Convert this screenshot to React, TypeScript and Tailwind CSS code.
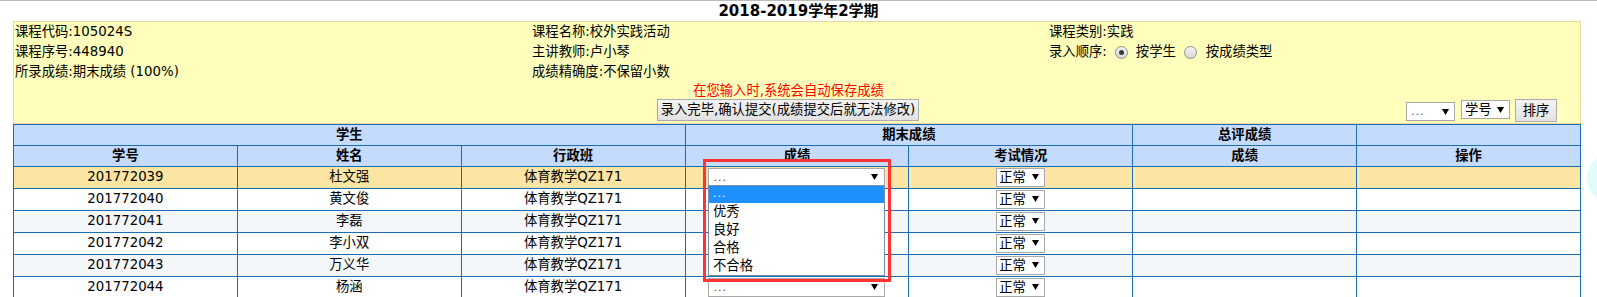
import React from "react";

function Arrow() {
  return (
    <svg width="7" height="6" viewBox="0 0 7 6" className="block">
      <polygon points="0,0 7,0 3.5,6" fill="#000" />
    </svg>
  );
}

function Radio({ checked }: { checked?: boolean }) {
  return (
    <span className="inline-flex w-[13px] h-[13px] rounded-full border border-[#8f8f8f] bg-gradient-to-b from-[#f4f4f4] to-[#d8d8d8] items-center justify-center shrink-0">
      {checked ? <span className="w-[5px] h-[5px] rounded-full bg-[#3a3a3a]" /> : null}
    </span>
  );
}

function GradeSelect() {
  return (
    <div className="mx-auto w-[177px] h-[19px] border border-[#a8a8a8] bg-white flex items-center justify-between pl-[4px] pr-[6px] text-left">
      <span className="text-[11px] leading-none text-[#6b3b3b] tracking-[1px]">...</span>
      <Arrow />
    </div>
  );
}

function StatusSelect() {
  return (
    <div className="mx-auto w-[49px] h-[19px] border border-[#a8a8a8] bg-white flex items-center justify-between pl-[2px] pr-[5px]">
      <span className="leading-none">正常</span>
      <Arrow />
    </div>
  );
}

const rows = [
  { id: "201772039", name: "杜文强", bg: "bg-[#fce5a2]", sel: true },
  { id: "201772040", name: "黄文俊", bg: "bg-white", sel: false },
  { id: "201772041", name: "李磊", bg: "bg-[#f4f7fa]", sel: false },
  { id: "201772042", name: "李小双", bg: "bg-white", sel: false },
  { id: "201772043", name: "万义华", bg: "bg-[#f4f7fa]", sel: false },
  { id: "201772044", name: "杨涵", bg: "bg-white", sel: true },
];

export default function App() {
  return (
    <div className="relative w-[1597px] h-[297px] overflow-hidden bg-white text-black text-[13.33px] font-['DejaVu_Sans','Noto_Sans_CJK_SC',sans-serif]">
      <div className="h-px bg-[#bcbcbc]" />
      <div className="h-[20px] leading-[20px] text-center font-bold text-[15px]">2018-2019学年2学期</div>

      <div className="ml-[13px] w-[1568px] border border-[#ecd9a0] bg-[#ffffbb]">
        <div className="grid grid-cols-[517px_517px_1fr] pl-[1px]">
          <div className="flex flex-col">
            <div className="h-[20px] leading-[20px]">课程代码:105024S</div>
            <div className="h-[20px] leading-[20px]">课程序号:448940</div>
            <div className="h-[20px] leading-[20px]">所录成绩:期末成绩 (100%)</div>
          </div>
          <div className="flex flex-col">
            <div className="h-[20px] leading-[20px]">课程名称:校外实践活动</div>
            <div className="h-[20px] leading-[20px]">主讲教师:卢小琴</div>
            <div className="h-[20px] leading-[20px]">成绩精确度:不保留小数</div>
          </div>
          <div className="flex flex-col">
            <div className="h-[20px] leading-[20px]">课程类别:实践</div>
            <div className="h-[20px] flex items-center">
              <span>录入顺序:</span>
              <span className="ml-[8px] mr-[8px] flex"><Radio checked /></span>
              <span>按学生</span>
              <span className="ml-[8px] mr-[9px] flex"><Radio /></span>
              <span>按成绩类型</span>
            </div>
            <div className="h-[20px]" />
          </div>
        </div>
        <div className="h-[17px] leading-[17px] text-center pr-[17px] text-[#ff0000]">在您输入时,系统会自动保存成绩</div>
        <div className="h-[24px] flex items-start">
          <div className="w-[643px] shrink-0" />
          <div className="w-[262px] h-[22px] shrink-0 border border-[#acacac] bg-gradient-to-b from-[#f3f3f3] to-[#e2e2e2] flex items-center justify-center leading-none">
            录入完毕,确认提交(成绩提交后就无法修改)
          </div>
          <div className="flex-1" />
          <div className="mt-[3px] w-[49px] h-[19px] border border-[#a8a8a8] bg-white flex items-center justify-between pl-[4px] pr-[5px]">
            <span className="text-[11px] leading-none text-[#555] tracking-[1px]">...</span>
            <Arrow />
          </div>
          <div className="ml-[6px] mt-[1px] w-[49px] h-[19px] border border-[#a8a8a8] bg-white flex items-center justify-between pl-[3px] pr-[5px]">
            <span className="leading-none">学号</span>
            <Arrow />
          </div>
          <div className="ml-[5px] w-[42px] h-[23px] border border-[#acacac] bg-gradient-to-b from-[#f3f3f3] to-[#e2e2e2] flex items-center justify-center leading-none">
            排序
          </div>
          <div className="w-[23px] shrink-0" />
        </div>
      </div>

      <table className="ml-[13px] w-[1568px] table-fixed border-collapse text-center">
        <tbody>
          <tr className="h-[20px] bg-[#c5dbfd] font-bold">
            <td colSpan={3} className="border border-[#1b6db8] p-0">学生</td>
            <td colSpan={2} className="border border-[#1b6db8] p-0">期末成绩</td>
            <td className="border border-[#1b6db8] p-0">总评成绩</td>
            <td className="border border-[#1b6db8] p-0"></td>
          </tr>
          <tr className="h-[20px] bg-[#c5dbfd] font-bold">
            <td className="border border-[#1b6db8] p-0">学号</td>
            <td className="border border-[#1b6db8] p-0">姓名</td>
            <td className="border border-[#1b6db8] p-0">行政班</td>
            <td className="border border-[#1b6db8] p-0">成绩</td>
            <td className="border border-[#1b6db8] p-0">考试情况</td>
            <td className="border border-[#1b6db8] p-0">成绩</td>
            <td className="border border-[#1b6db8] p-0">操作</td>
          </tr>
          {rows.map((r) => (
            <tr key={r.id} className={`h-[22px] ${r.bg}`}>
              <td className="border border-[#1b6db8] p-0">{r.id}</td>
              <td className="border border-[#1b6db8] p-0">{r.name}</td>
              <td className="border border-[#1b6db8] p-0">体育教学QZ171</td>
              <td className="border border-[#1b6db8] p-0">{r.sel ? <GradeSelect /> : <div className="h-[19px]" />}</td>
              <td className="border border-[#1b6db8] p-0"><StatusSelect /></td>
              <td className="border border-[#1b6db8] p-0"></td>
              <td className="border border-[#1b6db8] p-0"></td>
            </tr>
          ))}
        </tbody>
      </table>

      {/* open dropdown list */}
      <div className="absolute left-[708px] top-[185px] w-[177px] h-[91px] border border-[#7b8ba3] bg-white flex flex-col">
        <div className="h-[17px] bg-[#1e90ff] text-white pl-[4px] leading-[15px] text-[11px] tracking-[1px]">...</div>
        <div className="h-[18px] leading-[18px] pl-[4px]">优秀</div>
        <div className="h-[18px] leading-[18px] pl-[4px]">良好</div>
        <div className="h-[18px] leading-[18px] pl-[4px]">合格</div>
        <div className="h-[18px] leading-[18px] pl-[4px]">不合格</div>
      </div>

      {/* red highlight box */}
      <div className="absolute left-[703px] top-[159px] w-[188px] h-[123px] border-[3px] border-[#ff3333]" />

      {/* floating circle at right edge */}
      <div className="absolute left-[1587px] top-[153px] w-[50px] h-[50px] rounded-full bg-[#e2fbfb]" />
    </div>
  );
}
